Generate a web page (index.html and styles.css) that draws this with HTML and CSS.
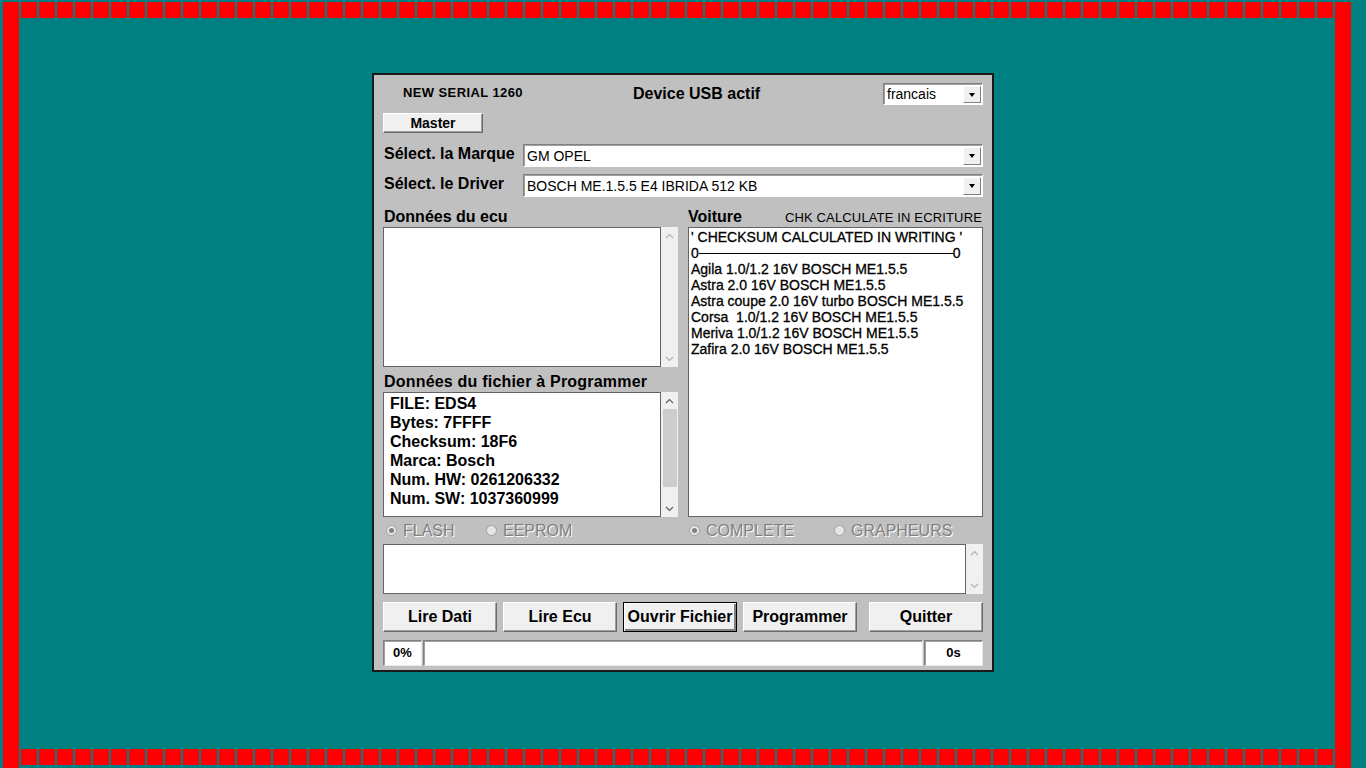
FILE: index.html
```html
<!DOCTYPE html>
<html lang="fr">
<head>
    <meta charset="UTF-8">
    <meta name="viewport" content="width=device-width, initial-scale=1.0">
    <title>NEW SERIAL 1260</title>
    <link rel="stylesheet" href="styles.css">
</head>
<body>
<div class="screen">
    <div class="side-bar"></div>
    <div class="middle">
        <div class="squares"></div>
        <div class="stage">
            <div class="window">
                <div class="header-row">
                    <div class="serial">NEW SERIAL 1260</div>
                    <div class="device">Device USB actif</div>
                    <div class="combo lang">
                        <span class="combo-text">francais</span>
                        <span class="combo-btn"><i class="tri"></i></span>
                    </div>
                </div>

                <button class="btn master">Master</button>

                <div class="select-row marque">
                    <label class="select-label">Sélect. la Marque</label>
                    <div class="combo wide">
                        <span class="combo-text">GM OPEL</span>
                        <span class="combo-btn"><i class="tri"></i></span>
                    </div>
                </div>
                <div class="select-row driver">
                    <label class="select-label">Sélect. le Driver</label>
                    <div class="combo wide">
                        <span class="combo-text">BOSCH ME.1.5.5 E4 IBRIDA 512 KB</span>
                        <span class="combo-btn"><i class="tri"></i></span>
                    </div>
                </div>

                <div class="columns">
                    <div class="col">
                        <div class="heading">Données du ecu</div>
                        <div class="scroll-box ecu">
                            <div class="white-box"></div>
                            <div class="scrollbar disabled">
                                <div class="sb-btn"><svg width="9" height="6" viewBox="0 0 9 6"><path d="M1 5L4.5 1.5L8 5" fill="none" stroke="currentColor" stroke-width="1.2"/></svg></div>
                                <div class="sb-track"></div>
                                <div class="sb-btn"><svg width="9" height="6" viewBox="0 0 9 6"><path d="M1 1L4.5 4.5L8 1" fill="none" stroke="currentColor" stroke-width="1.2"/></svg></div>
                            </div>
                        </div>
                        <div class="heading second">Données du fichier à Programmer</div>
                        <div class="scroll-box file">
                            <div class="white-box file-data">
                                <div>FILE: EDS4</div>
                                <div>Bytes: 7FFFF</div>
                                <div>Checksum: 18F6</div>
                                <div>Marca: Bosch</div>
                                <div>Num. HW: 0261206332</div>
                                <div>Num. SW: 1037360999</div>
                            </div>
                            <div class="scrollbar">
                                <div class="sb-btn"><svg width="9" height="6" viewBox="0 0 9 6"><path d="M1 5L4.5 1.5L8 5" fill="none" stroke="currentColor" stroke-width="1.2"/></svg></div>
                                <div class="sb-track"><div class="thumb"></div></div>
                                <div class="sb-btn"><svg width="9" height="6" viewBox="0 0 9 6"><path d="M1 1L4.5 4.5L8 1" fill="none" stroke="currentColor" stroke-width="1.2"/></svg></div>
                            </div>
                        </div>
                    </div>
                    <div class="col">
                        <div class="heading split">
                            <span>Voiture</span>
                            <span class="chk">CHK CALCULATE IN ECRITURE</span>
                        </div>
                        <div class="car-list">
                            <div>' CHECKSUM CALCULATED IN WRITING '</div>
                            <div class="zero-line">0<span class="rule"></span>0</div>
                            <div>Agila 1.0/1.2 16V BOSCH ME1.5.5</div>
                            <div>Astra 2.0 16V BOSCH ME1.5.5</div>
                            <div>Astra coupe 2.0 16V turbo BOSCH ME1.5.5</div>
                            <div>Corsa&nbsp; 1.0/1.2 16V BOSCH ME1.5.5</div>
                            <div>Meriva 1.0/1.2 16V BOSCH ME1.5.5</div>
                            <div>Zafira 2.0 16V BOSCH ME1.5.5</div>
                        </div>
                    </div>
                </div>

                <div class="columns radio-row">
                    <div class="radios left">
                        <span class="radio flash"><i class="dot checked"></i>FLASH</span>
                        <span class="radio"><i class="dot"></i>EEPROM</span>
                    </div>
                    <div class="radios right">
                        <span class="radio complete"><i class="dot checked"></i>COMPLETE</span>
                        <span class="radio"><i class="dot"></i>GRAPHEURS</span>
                    </div>
                </div>

                <div class="scroll-box log">
                    <div class="white-box"></div>
                    <div class="scrollbar disabled">
                        <div class="sb-btn"><svg width="9" height="6" viewBox="0 0 9 6"><path d="M1 5L4.5 1.5L8 5" fill="none" stroke="currentColor" stroke-width="1.2"/></svg></div>
                        <div class="sb-track"></div>
                        <div class="sb-btn"><svg width="9" height="6" viewBox="0 0 9 6"><path d="M1 1L4.5 4.5L8 1" fill="none" stroke="currentColor" stroke-width="1.2"/></svg></div>
                    </div>
                </div>

                <div class="button-row">
                    <button class="btn big">Lire Dati</button>
                    <button class="btn big">Lire Ecu</button>
                    <button class="btn big focused">Ouvrir Fichier</button>
                    <button class="btn big">Programmer</button>
                    <button class="btn big quit">Quitter</button>
                </div>

                <div class="status-row">
                    <div class="status percent">0%</div>
                    <div class="status progress"></div>
                    <div class="status time">0s</div>
                </div>
            </div>
        </div>
        <div class="squares bottom"></div>
    </div>
    <div class="side-bar"></div>
</div>
</body>
</html>
```

FILE: styles.css
```css
body {
    margin: 0;
    background: #008080;
    font-family: "Liberation Sans", Arial, sans-serif;
    color: #000;
}
.screen {
    display: flex;
    gap: 2px;
    width: 1366px;
    height: 768px;
    padding: 2px 0 0 3px;
    box-sizing: border-box;
    overflow: hidden;
}
.side-bar {
    flex: none;
    width: 16px;
    background: #ff0000;
}
.middle {
    width: 1312px;
    display: flex;
    flex-direction: column;
}
.squares {
    flex: none;
    height: 16px;
    background: repeating-linear-gradient(90deg, #ff0000 0 16px, transparent 16px 18px);
}
.squares.bottom {
    margin-bottom: 3px;
}
.stage {
    flex: 1;
    padding: 55px 0 0 351px;
}

/* window */
.window {
    width: 622px;
    height: 599px;
    box-sizing: border-box;
    border: 2px solid #1a1a1a;
    background: #c0c0c0;
    padding: 8px 9px 0;
}
.header-row {
    display: flex;
    align-items: center;
    height: 22px;
}
.serial {
    width: 250px;
    box-sizing: border-box;
    padding: 0 0 4px 20px;
    font-size: 13px;
    font-weight: bold;
    letter-spacing: 0.4px;
}
.device {
    font-size: 16px;
    font-weight: bold;
}

/* combo boxes */
.combo {
    display: flex;
    align-items: stretch;
    height: 22px;
    box-sizing: border-box;
    background: #fff;
    border: 1px solid;
    border-color: #808080 #fff #fff #808080;
    box-shadow: inset 1px 1px #a0a0a0;
}
.combo.lang {
    margin-left: auto;
    width: 100px;
}
.combo.wide {
    flex: 1;
    height: 23px;
}
.combo-text {
    flex: 1;
    padding: 1px 0 0 3px;
    font-size: 14px;
    line-height: 20px;
    white-space: nowrap;
}
.combo.lang .combo-text {
    padding-top: 0;
}
.combo-btn {
    width: 16px;
    margin: 2px 1px 1px 0;
    background: #f0f0f0;
    border: 1px solid;
    border-color: #fff #808080 #808080 #fff;
    display: flex;
    align-items: center;
    justify-content: center;
}
.tri {
    width: 0;
    height: 0;
    border-left: 3.5px solid transparent;
    border-right: 3.5px solid transparent;
    border-top: 4px solid #000;
}

/* buttons */
.btn {
    display: block;
    margin: 0;
    padding: 0;
    font-family: inherit;
    font-weight: bold;
    color: #000;
    background: #f0f0f0;
    border: 1px solid;
    border-color: #fff #6a6a6a #6a6a6a #fff;
    box-shadow: inset -1px -1px #a0a0a0;
    box-sizing: border-box;
}
.btn.master {
    width: 100px;
    height: 20px;
    margin-top: 8px;
    font-size: 14px;
}
.btn.big {
    width: 114px;
    height: 30px;
    font-size: 16px;
}
.btn.focused {
    border: 1px solid #000;
    box-shadow: inset 1px 1px #fff, inset -2px -2px #808080;
}

.select-row {
    display: flex;
    align-items: center;
    height: 23px;
}
.select-row.marque {
    margin-top: 11px;
}
.select-row.driver {
    margin-top: 7px;
}
.select-label {
    width: 140px;
    padding-left: 1px;
    padding-bottom: 4px;
    box-sizing: border-box;
    font-size: 16px;
    font-weight: bold;
    white-space: nowrap;
}

/* two panels */
.columns {
    display: grid;
    grid-template-columns: 295px 295px;
    column-gap: 10px;
    margin-top: 10px;
}
.col {
    display: flex;
    flex-direction: column;
}
.heading {
    height: 19px;
    line-height: 20px;
    margin-bottom: 1px;
    padding-left: 1px;
    font-size: 16px;
    font-weight: bold;
    white-space: nowrap;
}
.heading.second {
    height: 18px;
    line-height: 18px;
    margin-top: 6px;
    margin-bottom: 1px;
    letter-spacing: 0.2px;
}
.heading.split {
    display: flex;
    justify-content: space-between;
    align-items: baseline;
    padding-left: 0;
}
.chk {
    font-size: 13px;
    font-weight: normal;
    letter-spacing: 0.15px;
    padding-right: 1px;
}

.scroll-box {
    display: flex;
}
.scroll-box.ecu {
    height: 140px;
}
.scroll-box.file {
    height: 125px;
}
.scroll-box.log {
    height: 50px;
}
.white-box {
    flex: 1;
    background: #fff;
    border: 1px solid #646464;
}
.scrollbar {
    width: 17px;
    flex: none;
    background: #f0f0f0;
    display: flex;
    flex-direction: column;
    color: #606060;
}
.scrollbar.disabled {
    color: #b4b4b4;
}
.sb-btn {
    height: 17px;
    flex: none;
    display: flex;
    align-items: center;
    justify-content: center;
}
.sb-track {
    flex: 1;
}
.thumb {
    height: 78px;
    margin: 0 1px 0 2px;
    background: #cdcdcd;
}
.file-data {
    padding: 1px 0 0 6px;
    font-size: 16px;
    font-weight: bold;
    line-height: 19px;
}

.car-list {
    height: 290px;
    box-sizing: border-box;
    background: #fff;
    border: 1px solid #646464;
    padding: 1px 0 0 2px;
    font-size: 14px;
    line-height: 16px;
    -webkit-text-stroke: 0.3px #000;
    white-space: nowrap;
}
.zero-line {
    display: flex;
    align-items: center;
}
.rule {
    width: 254px;
    height: 0;
    border-top: 1px solid #000;
}

/* radios */
.radio-row {
    margin-top: 0;
    height: 27px;
}
.radios {
    display: flex;
    align-items: center;
}
.radio {
    display: flex;
    align-items: center;
    gap: 6px;
    font-size: 16px;
    color: #808080;
    text-shadow: 1px 1px 0 #fff;
}
.radios.left {
    padding-left: 3px;
}
.radio.flash {
    width: 100px;
}
.radios.right {
    padding-left: 1px;
}
.radio.complete {
    width: 145px;
}
.dot {
    width: 11px;
    height: 11px;
    box-sizing: border-box;
    border-radius: 50%;
    background: #e6e6e6;
    border: 1px solid #a0a0a0;
    display: flex;
    align-items: center;
    justify-content: center;
}
.dot.checked::after {
    content: "";
    width: 5px;
    height: 5px;
    border-radius: 50%;
    background: #808080;
}

.button-row {
    display: flex;
    gap: 6px;
    margin-top: 8px;
}
.btn.quit {
    margin-left: 6px;
}

.status-row {
    display: flex;
    gap: 1px;
    margin-top: 8px;
    height: 26px;
}
.status {
    box-sizing: border-box;
    background: #fff;
    border: 1px solid;
    border-color: #808080 #e8e8e8 #e8e8e8 #808080;
    box-shadow: inset 1px 1px #a0a0a0;
    font-size: 13px;
    font-weight: bold;
    line-height: 24px;
    text-align: center;
}
.status.percent {
    width: 39px;
}
.status.progress {
    flex: 1;
}
.status.time {
    width: 59px;
}
```
